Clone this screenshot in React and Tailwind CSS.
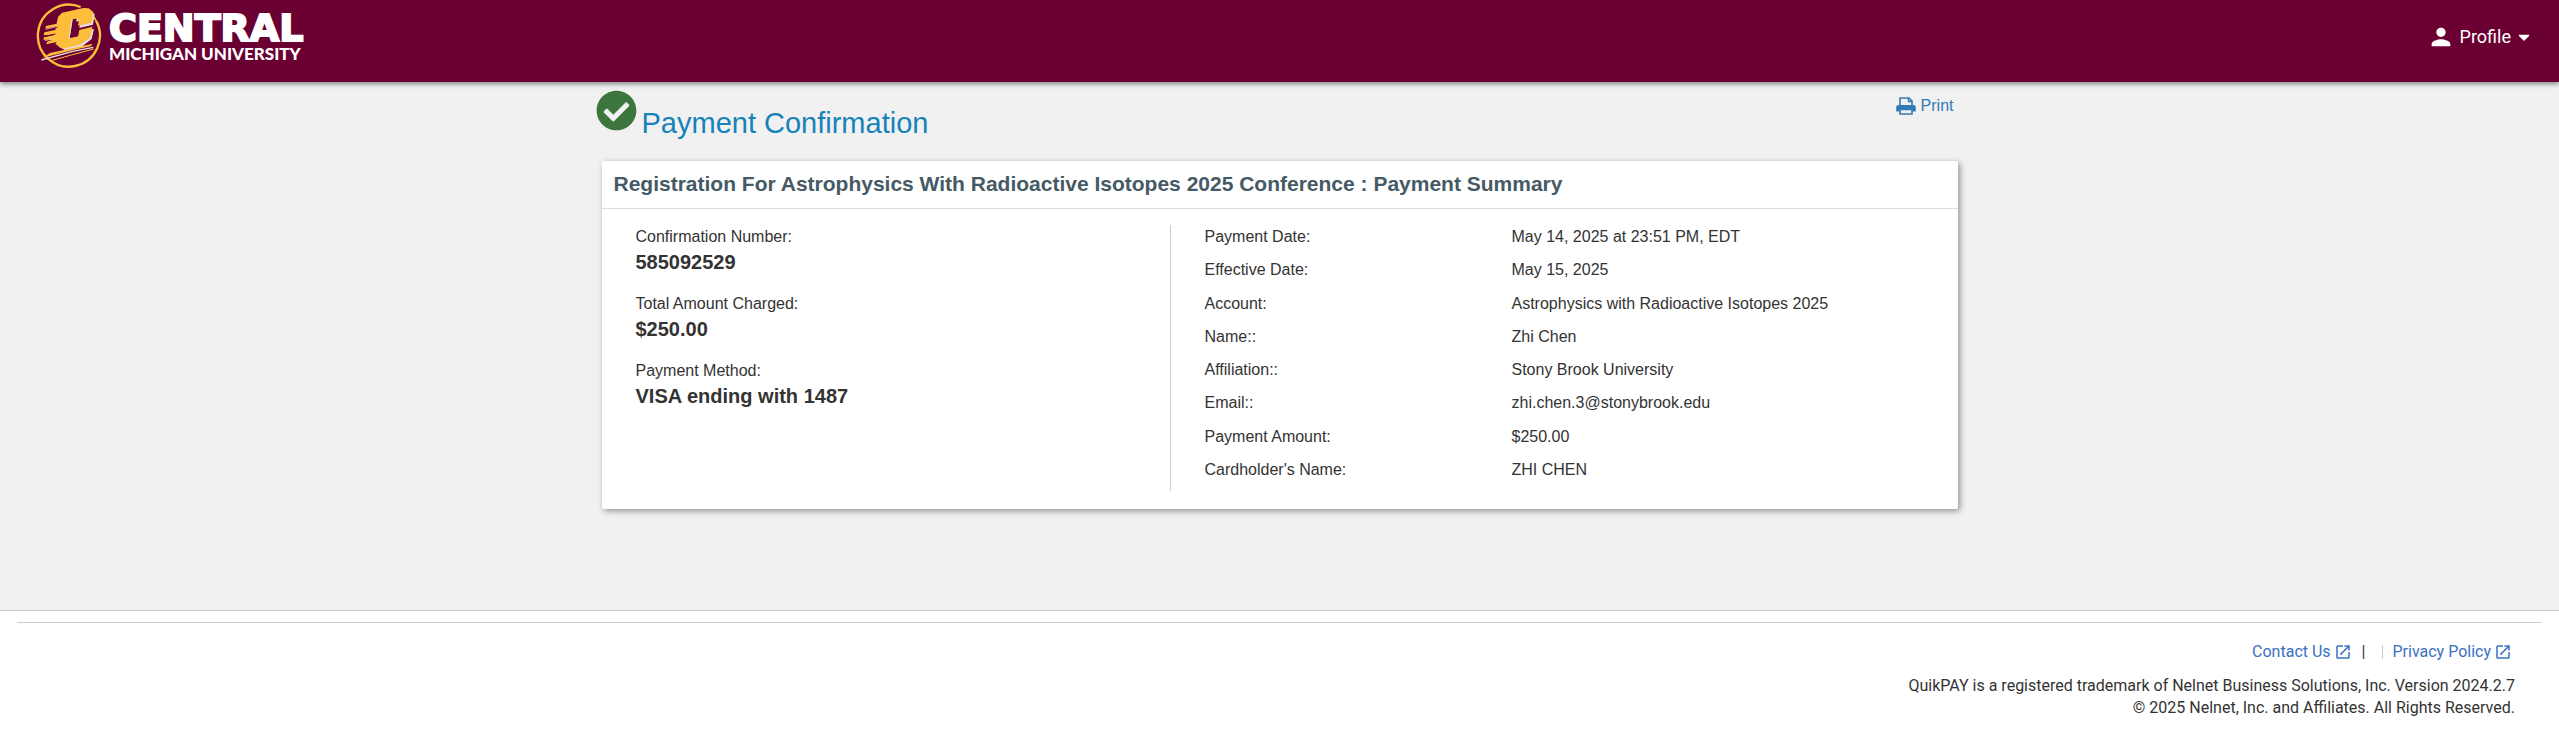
import { FaCheckCircle, FaCaretDown } from "react-icons/fa";
import { MdPerson, MdOpenInNew } from "react-icons/md";

const charges = [
  ["Confirmation Number:", "585092529"],
  ["Total Amount Charged:", "$250.00"],
  ["Payment Method:", "VISA ending with 1487"],
];

const details = [
  ["Payment Date:", "May 14, 2025 at 23:51 PM, EDT"],
  ["Effective Date:", "May 15, 2025"],
  ["Account:", "Astrophysics with Radioactive Isotopes 2025"],
  ["Name::", "Zhi Chen"],
  ["Affiliation::", "Stony Brook University"],
  ["Email::", "zhi.chen.3@stonybrook.edu"],
  ["Payment Amount:", "$250.00"],
  ["Cardholder's Name:", "ZHI CHEN"],
];

function Emblem() {
  return (
    <svg viewBox="108 9 198 198" className="size-[66px]" fill="none" aria-hidden="true">
      <path d="M242 21 A93 93 0 1 0 288 62" stroke="#fbbd3a" strokeWidth="7" />
      <path d="M288 62 A93 93 0 0 0 281 50" stroke="#fbbd3a" strokeWidth="5" />
      <path d="M194 45 L246 31 L266 31 L284 42 L279 74 L238 84 L242 62 L222 66 L213 113 L238 109 L241 98 L282 86 L275 117 L244 141 L196 151 L176 140 Z" fill="#e9dbe2" />
      <path d="M186 38 L250 24 L266 25 L280 36 L275 68 L234 77 L237 58 L216 61 L208 115 L234 110 L238 90 L277 80 L270 113 L240 134 L188 146 L166 132 L170 126 L139 133 L141 125 L158 119 L130 119 L132 112 L166 104 L131 106 L133 97 L166 90 L174 51 Z" fill="#fbbd3a" />
      <path d="M218 58 L209 114 L220 112 L230 56 Z" fill="#6a0032" />
      <path d="M216 59 L207 116" stroke="#e9dbe2" strokeWidth="3" />
      <path d="M138 78 L184 68 L183 76 L136 86 Z" fill="#fbbd3a" />
      <path d="M136 90 L172 82 M132 109 L166 102" stroke="#6a0032" strokeWidth="3" />
      <path d="M137 88 L170 80 M134 122 L160 117" stroke="#e9dbe2" strokeWidth="2" />
      <path d="M126 174 L150 159 L278 131 L272 139 L220 150 Z" fill="#fbbd3a" />
      <path d="M124 180 L218 154 L280 142" stroke="#e9dbe2" strokeWidth="4" />
      <path d="M150 183 L214 165 L281 147" stroke="#fbbd3a" strokeWidth="3" />
    </svg>
  );
}

function PrinterIcon() {
  return (
    <svg viewBox="0 0 20 18" className="h-[18px] w-5" aria-hidden="true">
      <path d="M4 9V1h9l3 3v5" fill="none" stroke="#337ab7" strokeWidth="1.6" />
      <path d="M12.5 1v3.5H16" fill="none" stroke="#337ab7" strokeWidth="1.4" />
      <path d="M2.5 8h15A2.2 2.2 0 0 1 19.8 10v4.5H16.5V12.5h-13v2H.2V10A2.2 2.2 0 0 1 2.5 8z" fill="#337ab7" />
      <path d="M4 12.5v4.5h12v-4.5z" fill="#f1f1f1" stroke="#337ab7" strokeWidth="1.6" />
    </svg>
  );
}

export default function App() {
  return (
    <div className="bg-white font-['Liberation_Sans',Arial,sans-serif] text-base text-[#333]">
      <header className="relative flex h-[82px] items-start justify-between bg-[#6a0032] pr-[26px] pl-9 text-white shadow-[0_2px_5px_rgba(0,0,0,0.45)]">
        <a href="#home" className="flex items-start gap-[5px] pt-[3px]" aria-label="Central Michigan University">
          <Emblem />
          <span className="flex flex-col pt-[11px]">
            <svg viewBox="0 0 220 30" className="h-[30px] w-[220px] overflow-visible" fill="#fff">
              <text x="2" y="27" fontFamily="DejaVu Sans, sans-serif" fontWeight="700" fontSize="38" stroke="#fff" strokeWidth="2">CENTRAL</text>
            </svg>
            <svg viewBox="0 0 220 18" className="h-[18px] w-[220px] overflow-visible" fill="#fff">
              <text x="2" y="16" fontFamily="Lato, sans-serif" fontWeight="900" fontSize="17">MICHIGAN UNIVERSITY</text>
            </svg>
          </span>
        </a>
        <button type="button" className="mt-[23px] flex items-center font-[Roboto,sans-serif] text-lg leading-6">
          <MdPerson className="size-7" />
          <span className="ml-[5px]">Profile</span>
          <FaCaretDown className="ml-1 size-[18px]" />
        </button>
      </header>

      <main className="bg-[#f1f1f1] pb-[101px]">
        <div className="mx-auto max-w-[1368px]">
          <div className="flex h-[79px] items-start justify-between pt-2">
            <h1 className="flex items-start gap-[5px] text-[29px] leading-9 text-[#1583b9]">
              <FaCheckCircle className="size-[41px] text-[#3c763d]" />
              <span className="pt-[15px]">Payment Confirmation</span>
            </h1>
            <a href="#print" className="mr-[10px] flex items-center gap-[5px] pt-1 leading-6 text-[#337ab7]">
              <PrinterIcon />
              Print
            </a>
          </div>

          <section className="mx-[6px] rounded-xs bg-white pb-[18px] shadow-[2px_2px_6px_rgba(0,0,0,0.4)]">
            <h2 className="border-b border-[#ddd] px-3 pt-2 pb-[9px] text-[21px] leading-[30px] font-bold text-[#455a64]">
              Registration For Astrophysics With Radioactive Isotopes 2025 Conference : Payment Summary
            </h2>
            <div className="mt-4 flex h-[266px]">
              <dl className="w-[569px] border-r border-[#ccc] pl-[34px]">
                {charges.map(([label, value]) => (
                  <div key={label} className="mb-4">
                    <dt className="leading-6">{label}</dt>
                    <dd className="text-xl leading-[27px] font-bold">{value}</dd>
                  </div>
                ))}
              </dl>
              <dl className="grid flex-1 grid-rows-8 pl-[34px]">
                {details.map(([label, value]) => (
                  <div key={label} className="flex leading-6">
                    <dt className="w-[307px]">{label}</dt>
                    <dd>{value}</dd>
                  </div>
                ))}
              </dl>
            </div>
          </section>
        </div>
      </main>

      <footer className="border-t border-[#ccc] px-[17px] pt-[11px] font-[Roboto,sans-serif]">
        <hr className="border-[#ccc]" />
        <div className="pr-[27px] text-right">
          <nav className="flex items-center justify-end pt-[17px] pr-[3px] leading-6 text-[#3a70c0]">
            <a href="#contact" className="flex items-center gap-[3px]">
              Contact Us
              <MdOpenInNew className="size-[18px]" />
            </a>
            <span className="ml-[10px] text-[#333]">|</span>
            <span className="ml-4 h-[14px] w-px bg-[#ccc]" />
            <a href="#privacy" className="ml-[10px] flex items-center gap-[3px]">
              Privacy Policy
              <MdOpenInNew className="size-[18px]" />
            </a>
          </nav>
          <p className="mt-[11px] leading-[22px]">
            QuikPAY is a registered trademark of Nelnet Business Solutions, Inc. Version 2024.2.7
          </p>
          <p className="leading-[22px]">© 2025 Nelnet, Inc. and Affiliates. All Rights Reserved.</p>
        </div>
      </footer>
    </div>
  );
}
